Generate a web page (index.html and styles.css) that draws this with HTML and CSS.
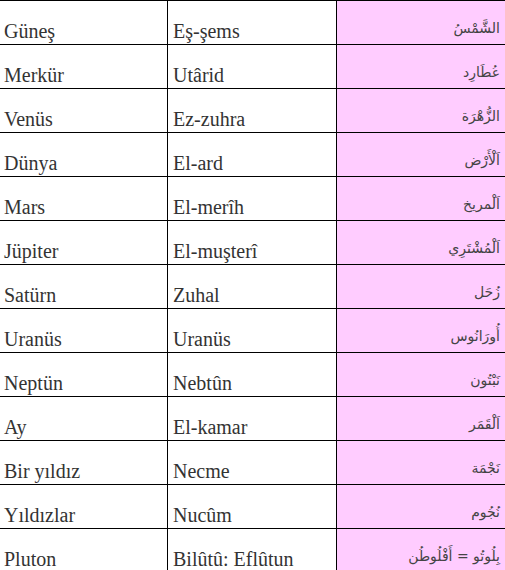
FILE: index.html
```html
<!DOCTYPE html>
<html lang="tr">
<head>
<meta charset="utf-8">
<title>Gezegenler</title>
<link rel="stylesheet" href="styles.css">
</head>
<body>
<div class="table">
  <div class="c tr">Güneş</div><div class="c lat">Eş-şems</div><div class="c ar" dir="rtl">الشَّمْسُ</div>
  <div class="c tr">Merkür</div><div class="c lat">Utârid</div><div class="c ar" dir="rtl">عُطَارِد</div>
  <div class="c tr">Venüs</div><div class="c lat">Ez-zuhra</div><div class="c ar" dir="rtl">الزُّهْرَة</div>
  <div class="c tr">Dünya</div><div class="c lat">El-ard</div><div class="c ar" dir="rtl">اَلْأَرْض</div>
  <div class="c tr">Mars</div><div class="c lat">El-merîh</div><div class="c ar" dir="rtl">اَلْمريخ</div>
  <div class="c tr">Jüpiter</div><div class="c lat">El-muşterî</div><div class="c ar" dir="rtl">اَلْمُشْتَرِي</div>
  <div class="c tr">Satürn</div><div class="c lat">Zuhal</div><div class="c ar" dir="rtl">زُحَل</div>
  <div class="c tr">Uranüs</div><div class="c lat">Uranüs</div><div class="c ar" dir="rtl">أُورَانُوس</div>
  <div class="c tr">Neptün</div><div class="c lat">Nebtûn</div><div class="c ar" dir="rtl">نَبْتُون</div>
  <div class="c tr">Ay</div><div class="c lat">El-kamar</div><div class="c ar" dir="rtl">اَلْقَمَر</div>
  <div class="c tr">Bir yıldız</div><div class="c lat">Necme</div><div class="c ar" dir="rtl">نَجْمَة</div>
  <div class="c tr">Yıldızlar</div><div class="c lat">Nucûm</div><div class="c ar" dir="rtl">نُجُوم</div>
  <div class="c tr">Pluton</div><div class="c lat">Bilûtû: Eflûtun</div><div class="c ar" dir="rtl">بِلُوتُو = أَفْلُوطُن</div>
</div>
</body>
</html>
```
FILE: styles.css
```css
html, body {
  margin: 0;
  padding: 0;
  background: #ffffff;
  overflow: hidden;
}
.table {
  display: grid;
  grid-template-columns: 167px 168px 1fr;
  grid-auto-rows: 43px;
  gap: 1px;
  padding-top: 1px;
  background: #000000;
  width: 505px;
}
.c {
  background: #ffffff;
  font-family: "Liberation Serif", "Times New Roman", serif;
  font-size: 20px;
  color: #333333;
  padding: 19px 4px 0 4px;
  line-height: 22px;
  white-space: nowrap;
}
.lat {
  padding-left: 5px;
}
.ar {
  background: #ffccff;
  font-family: "DejaVu Sans", sans-serif;
  font-size: 14px;
  color: #444444;
  text-align: right;
  padding-right: 5px;
  padding-top: 16px;
}
```
